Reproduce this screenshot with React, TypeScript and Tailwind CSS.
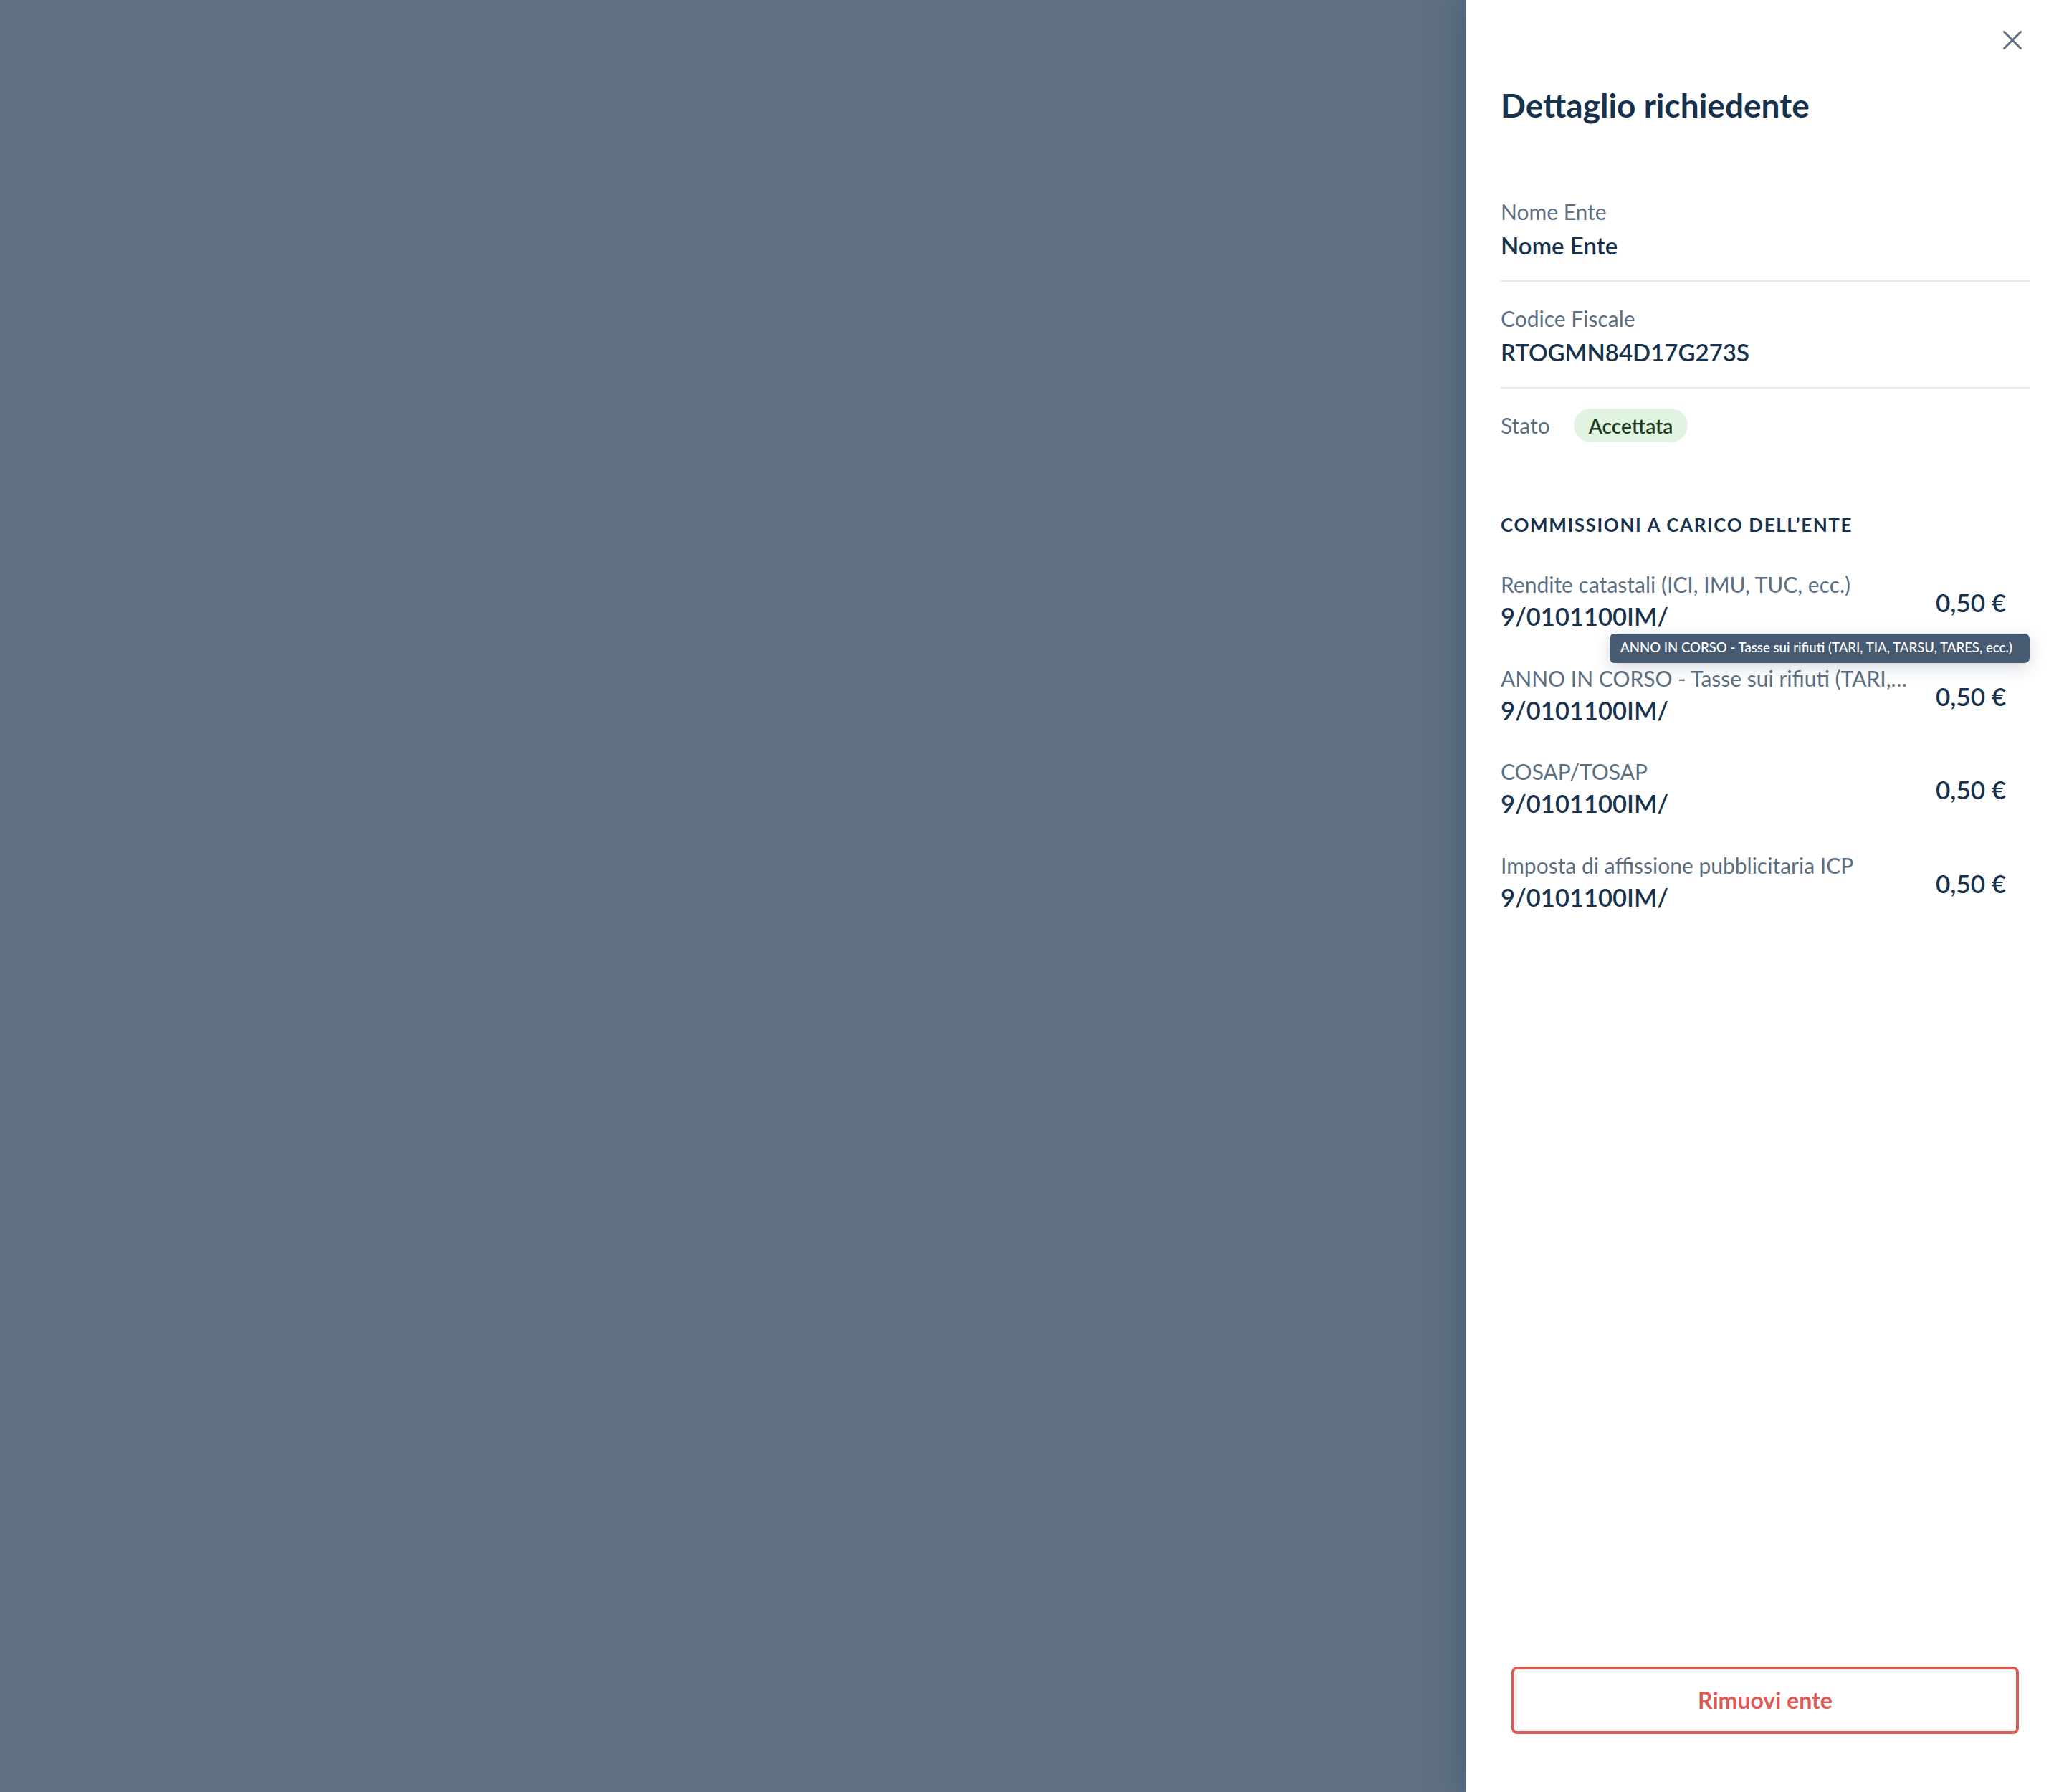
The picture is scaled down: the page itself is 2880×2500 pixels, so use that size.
import React from "react";

const rows = [
  { label: "Rendite catastali (ICI, IMU, TUC, ecc.)", code: "9/0101100IM/", amount: "0,50 €" },
  { label: "ANNO IN CORSO - Tasse sui rifiuti (TARI, TIA, TARSU, TARES, ecc.)", code: "9/0101100IM/", amount: "0,50 €", tip: true },
  { label: "COSAP/TOSAP", code: "9/0101100IM/", amount: "0,50 €" },
  { label: "Imposta di affissione pubblicitaria ICP", code: "9/0101100IM/", amount: "0,50 €" },
];

export default function App() {
  return (
    <div className="flex h-[2500px] w-full overflow-hidden" style={{ fontFamily: "Lato, 'Noto Sans', sans-serif" }}>
      <div className="flex-1 bg-[#5e7082]" />
      <aside className="relative flex h-full w-[834px] flex-col bg-white shadow-[0_0_48px_rgba(23,50,77,0.35)]">
        <div className="flex justify-end pr-[59px] pt-[43px]">
          <button className="h-[26px] w-[26px] text-[#5c6f82]" aria-label="Chiudi">
            <svg width="26" height="26" viewBox="0 0 26 26" fill="none" stroke="currentColor" strokeWidth="3" strokeLinecap="round">
              <line x1="1.5" y1="1.5" x2="24.5" y2="24.5" />
              <line x1="24.5" y1="1.5" x2="1.5" y2="24.5" />
            </svg>
          </button>
        </div>
        <div className="px-[48px]">
          <h2 className="mt-[50px] text-[46px] font-bold leading-[1.2] text-[#17324d]">Dettaglio richiedente</h2>

          <div className="mt-[70px] border-b-2 border-[#e6e9ee] pb-[25px] pt-[28px]">
            <div className="text-[30px] leading-[47px] text-[#5c6f82]">Nome Ente</div>
            <div className="text-[33px] font-semibold leading-[47px] text-[#17324d]">Nome Ente</div>
          </div>
          <div className="border-b-2 border-[#e6e9ee] pb-[25px] pt-[28px]">
            <div className="text-[30px] leading-[47px] text-[#5c6f82]">Codice Fiscale</div>
            <div className="text-[33px] font-semibold leading-[47px] text-[#17324d]">RTOGMN84D17G273S</div>
          </div>
          <div className="flex items-center gap-[33px] pt-[28px]">
            <span className="text-[30px] leading-[47px] text-[#5c6f82]">Stato</span>
            <span className="flex h-[47px] items-center rounded-full bg-[#e1f3e1] px-[21px] text-[28px] font-semibold text-[#1d3b1e]">
              Accettata
            </span>
          </div>

          <h3 className="mt-[100px] text-[26px] font-bold uppercase leading-[1.2] tracking-[0.062em] text-[#17324d]">
            Commissioni a carico dell’ente
          </h3>

          <div className="mt-[44px] flex flex-col gap-[40.4px]">
            {rows.map((r, i) => (
              <div key={i} className="relative flex items-center justify-between pr-[33px]">
                <div className="w-[570px] min-w-0">
                  <div className="truncate text-[30px] leading-[46px] text-[#5c6f82]">{r.label}</div>
                  <div className="text-[34.5px] font-semibold leading-[44px] text-[#17324d]">{r.code}</div>
                </div>
                <div className="pt-[6px] text-[35px] font-semibold leading-[44px] text-[#17324d]">{r.amount}</div>
                {r.tip && (
                  <div className="absolute right-0 top-[-39px] left-[152px] flex h-[41px] items-center whitespace-nowrap rounded-[7px] bg-[#465b72] px-[15px] text-[18.6px] font-medium text-white shadow-[0_6px_24px_rgba(23,50,77,0.18)]">
                    ANNO IN CORSO - Tasse sui rifiuti (TARI, TIA, TARSU, TARES, ecc.)
                  </div>
                )}
              </div>
            ))}
          </div>
        </div>

        <div className="flex-1" />
        <div className="px-[63px] pb-[81px]">
          <button className="flex h-[94px] w-full items-center justify-center rounded-[8px] border-4 border-[#da5a56] text-[32px] font-bold text-[#da5a56]">
            Rimuovi ente
          </button>
        </div>
      </aside>
    </div>
  );
}
